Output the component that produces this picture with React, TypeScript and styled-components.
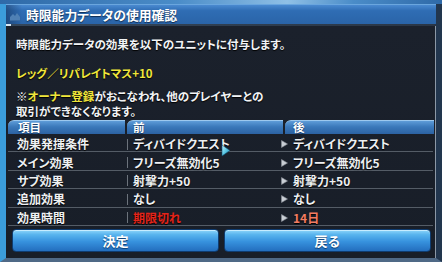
import React from "react";
import styled, { createGlobalStyle } from "styled-components";

const GlobalStyle = createGlobalStyle`
  html, body {
    margin: 0;
    padding: 0;
    background: #0d1620;
  }
  body {
    font-family: "Noto Sans CJK JP", "Noto Sans", sans-serif;
    font-feature-settings: "palt";
  }
`;

const Screen = styled.div`
  position: relative;
  width: 442px;
  height: 262px;
  overflow: hidden;
  display: flex;
  flex-direction: column;
  background: #1a2230;
`;

const BackStrip = styled.div`
  height: 4px;
  background: linear-gradient(90deg, #2f6aa8 0%, #4a8cc8 40%, #8fc0e6 65%, #4a8cc8 80%, #2f6aa8 100%);
`;

const Window = styled.div`
  flex: 1;
  display: flex;
  flex-direction: column;
  border-left: 6px solid #3b9ddb;
  border-right: 6px solid #22364e;
  border-bottom: 4px solid #4f6986;
  box-shadow: inset 1px 0 0 #1c5a8c;
`;

const TitleBar = styled.div`
  height: 20px;
  display: flex;
  align-items: center;
  gap: 4px;
  padding-left: 2px;
  background: linear-gradient(90deg, rgba(20, 50, 90, 0.55) 0px, rgba(20, 50, 90, 0) 16px),
    linear-gradient(180deg, #4a8ad0 0%, #2f6db4 30%, #2a64a8 100%);
  border-top: 1px solid #6aa6de;
  box-sizing: border-box;
`;

const TitleText = styled.span`
  color: #ffffff;
  font-size: 12.8px;
  font-weight: 700;
  line-height: 18px;
  text-shadow: 0 1px 1px #0c2a50;
`;

const TitleRule = styled.div`
  height: 2px;
  background: linear-gradient(90deg, #d8e8f4 0px, #d8e8f4 5px, #34465a 5px, #2a3646 100%);
`;

const Body = styled.div`
  flex: 1;
  display: flex;
  flex-direction: column;
  background: linear-gradient(180deg, #1b212c 0%, #181e28 100%);
  border-right: 1px solid #8c98a6;
`;

const Message = styled.div`
  padding: 10px 0 0 10px;
  color: #f2f4f6;
  font-size: 11.5px;
  font-weight: 700;
  text-shadow: 0 1px 1px #000;
`;

const Line = styled.div<{ $gap?: number; $lh?: number; $color?: string }>`
  margin-top: ${(p) => p.$gap ?? 0}px;
  line-height: ${(p) => p.$lh ?? 16}px;
  color: ${(p) => p.$color ?? "inherit"};
  white-space: nowrap;
`;

const Hi = styled.span`
  color: #f0e63a;
`;

const Table = styled.div`
  position: relative;
  margin: 1.5px 2px 0;
`;

const HeadRow = styled.div`
  display: grid;
  grid-template-columns: 117px 156px 149px;
  column-gap: 2px;
  height: 14px;
`;

const HeadCell = styled.div<{ $pad: number }>`
  padding-left: ${(p) => p.$pad}px;
  border-top-left-radius: 6px;
  border-top: 1px solid #9cc8ee;
  box-sizing: border-box;
  background: linear-gradient(180deg, #5e9cd8 0%, #3a78ba 45%, #2c62a2 100%);
  color: #ffffff;
  font-size: 11.5px;
  font-weight: 700;
  line-height: 12px;
  text-shadow: 0 1px 1px #10305a;
`;

const Row = styled.div`
  display: grid;
  grid-template-columns: 119px 1px 149px 157px;
  align-items: center;
  height: 14.4px;
  padding-top: 3px;
  line-height: 14px;
  border-bottom: 1px solid #545c66;
  color: #eef0f2;
  font-size: 12px;
  font-weight: 700;
  text-shadow: 0 1px 1px #000;
  white-space: nowrap;
`;

const Label = styled.div`
  padding-left: 9px;
`;

const Divider = styled.div`
  height: 11px;
  background: #6c737c;
`;

const Value = styled.div<{ $color?: string }>`
  padding-left: 5px;
  color: ${(p) => p.$color ?? "inherit"};
`;

const After = styled.div<{ $color?: string }>`
  display: flex;
  align-items: center;
  gap: 5px;
  padding-left: 4px;
  color: ${(p) => p.$color ?? "inherit"};
`;

const Cursor = styled.svg`
  position: absolute;
  left: 213px;
  top: 24px;
`;

const Buttons = styled.div`
  display: grid;
  grid-template-columns: 1fr 1fr;
  column-gap: 5px;
  padding: 3px 4px 0 6px;
`;

const Button = styled.button`
  height: 23px;
  border: 1px solid #0f3c70;
  border-radius: 4px;
  background: linear-gradient(180deg, #8fd6fa 0%, #58b4ee 22%, #3792de 55%, #236ebe 100%);
  box-shadow: inset 0 1px 0 #c6ecff;
  color: #ffffff;
  font-family: inherit;
  font-size: 13px;
  font-weight: 700;
  text-shadow: 0 1px 1px #0b3a6e;
  padding: 0;
`;

const Arrow = () => (
  <svg width="7" height="8" viewBox="0 0 7 8">
    <path d="M0.5 0.5 L6.5 4 L0.5 7.5 Z" fill="#c9ced4" stroke="#8a9098" strokeWidth="0.6" />
  </svg>
);

const TitleIcon = () => (
  <svg width="14" height="14" viewBox="0 0 14 14">
    <path d="M2 12 L2 9 L5 6 L7 8 L9 5 L12 9 L12 12 Z" fill="#4f80b4" />
    <rect x="2" y="12" width="10" height="1" fill="#3a6aa0" />
  </svg>
);

type Item = { label: string; before: string; after: string; beforeColor?: string; afterColor?: string };

const rows: Item[] = [
  { label: "効果発揮条件", before: "ディバイドクエスト", after: "ディバイドクエスト" },
  { label: "メイン効果", before: "フリーズ無効化5", after: "フリーズ無効化5" },
  { label: "サブ効果", before: "射撃力+50", after: "射撃力+50" },
  { label: "追加効果", before: "なし", after: "なし" },
  { label: "効果時間", before: "期限切れ", after: "14日", beforeColor: "#e3241a", afterColor: "#f27c62" },
];

export default function App() {
  return (
    <Screen>
      <GlobalStyle />
      <BackStrip />
      <Window>
        <TitleBar>
          <TitleIcon />
          <TitleText>時限能力データの使用確認</TitleText>
        </TitleBar>
        <TitleRule />
        <Body>
          <Message>
            <Line>時限能力データの効果を以下のユニットに付与します。</Line>
            <Line $gap={13} $color="#f0e63a">レッグ／リパレイトマス+10</Line>
            <Line $gap={7.5} $lh={15}>
              ※<Hi>オーナー登録</Hi>がおこなわれ、他のプレイヤーとの
            </Line>
            <Line $lh={15}>取引ができなくなります。</Line>
          </Message>
          <Table>
            <HeadRow>
              <HeadCell $pad={10}>項目</HeadCell>
              <HeadCell $pad={6}>前</HeadCell>
              <HeadCell $pad={8}>後</HeadCell>
            </HeadRow>
            {rows.map((r) => (
              <Row key={r.label}>
                <Label>{r.label}</Label>
                <Divider />
                <Value $color={r.beforeColor}>{r.before}</Value>
                <After $color={r.afterColor}>
                  <Arrow />
                  <span>{r.after}</span>
                </After>
              </Row>
            ))}
            <Cursor width="10" height="13" viewBox="0 0 10 13">
              <defs>
                <linearGradient id="cur" x1="0" y1="0" x2="1" y2="1">
                  <stop offset="0" stopColor="#c8f6ff" />
                  <stop offset="0.5" stopColor="#5cc8e4" />
                  <stop offset="1" stopColor="#1e7ea8" />
                </linearGradient>
              </defs>
              <path d="M1 1 L9 6.5 L1 12 Z" fill="url(#cur)" stroke="#0e4e6e" strokeWidth="0.6" strokeLinejoin="round" />
            </Cursor>
          </Table>
          <Buttons>
            <Button>決定</Button>
            <Button>戻る</Button>
          </Buttons>
        </Body>
      </Window>
    </Screen>
  );
}
